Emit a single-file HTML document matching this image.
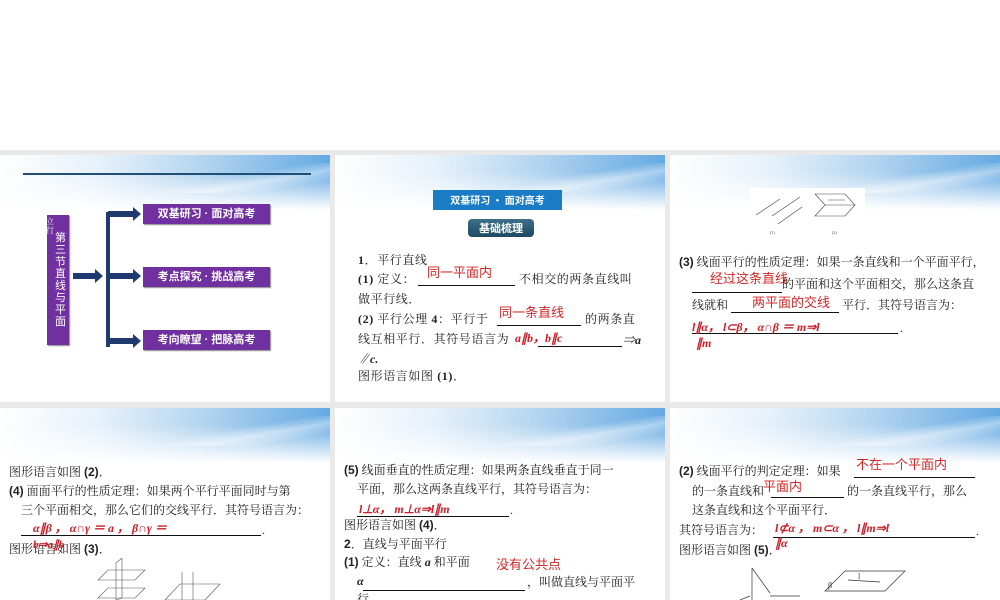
<!DOCTYPE html>
<html><head><meta charset="utf-8"><style>
*{margin:0;padding:0;box-sizing:border-box}
body{width:1000px;height:600px;background:#fff;position:relative;overflow:hidden;font-family:"Liberation Serif","Noto Serif CJK SC","Noto Sans CJK SC",serif;font-size:12px;color:#222}
.grid{position:absolute;left:0;top:150px;width:1000px;height:450px;background:#e9e9e9}
.s{position:absolute;background:#fff;overflow:hidden}
.hd{position:absolute;left:0;top:0;width:100%;height:55px;
background:linear-gradient(180deg,rgba(255,255,255,0) 0%,rgba(255,255,255,0) 30%,#fff 100%),linear-gradient(100deg,#fff 0%,#e6f1fa 30%,#b4d5f0 60%,#5fa6e2 100%)}
.hd:after{content:"";position:absolute;left:45%;top:8px;width:70%;height:30px;background:linear-gradient(170deg,rgba(255,255,255,0) 40%,rgba(255,255,255,.45) 55%,rgba(255,255,255,0) 70%)}
.t{position:absolute;white-space:nowrap;line-height:14px}
.b{font-family:"Liberation Sans",sans-serif;font-weight:bold}
.r{color:#d02828;font-family:"Liberation Sans","Noto Sans CJK SC",sans-serif;font-size:13px}
.ri{color:#c8202a;font-weight:bold;font-style:italic;font-family:"Liberation Serif",serif}
.u{position:absolute;border-bottom:1px solid #111;height:1px}
.pb{position:absolute;background:#7030a0;color:#fff;font-family:"Liberation Sans","Noto Sans CJK SC",sans-serif;font-weight:bold;font-size:11px;text-align:center;line-height:20px;box-shadow:1px 1px 1px #888}
.ls{letter-spacing:.6px}
</style></head><body>
<div class="grid"></div>

<!-- slide 1 -->
<div class="s" style="left:0;top:155px;width:330px;height:247px">
<div class="hd"></div>
<div style="position:absolute;left:23px;top:18px;width:288px;height:2px;background:#1f4e79"></div>
<div style="position:absolute;left:47px;top:60px;width:22px;height:130px;background:#7030a0;box-shadow:1px 1px 1px #888"></div>
<div class="t" style="left:55px;top:76px;width:12px;color:#fff;font-family:'Noto Sans CJK SC',sans-serif;font-size:11px;line-height:12px;white-space:normal">第三节　直线与平面</div>
<div class="t" style="left:46px;top:62px;color:#fff;font-size:8px;line-height:9px;width:6px;white-space:normal">立行</div>
<svg style="position:absolute;left:0;top:0" width="330" height="247">
<g fill="#1f3a6e">
<rect x="73" y="118" width="22" height="6"/><polygon points="95,114 103,121 95,128"/>
<rect x="106" y="57" width="4" height="135"/>
<rect x="108" y="56" width="25" height="6"/><polygon points="133,52 141,59 133,66"/>
<rect x="108" y="118" width="25" height="6"/><polygon points="133,114 141,121 133,128"/>
<rect x="108" y="183" width="25" height="6"/><polygon points="133,179 141,186 133,193"/>
</g></svg>
<div class="pb" style="left:143px;top:49px;width:127px">双基研习 · 面对高考</div>
<div class="pb" style="left:143px;top:112px;width:127px">考点探究 · 挑战高考</div>
<div class="pb" style="left:143px;top:175px;width:127px">考向瞭望 · 把脉高考</div>
</div>

<!-- slide 2 -->
<div class="s" style="left:335px;top:155px;width:330px;height:247px">
<div class="hd"></div>
<div style="position:absolute;left:98px;top:35px;width:129px;height:20px;background:#1a7cc4;color:#fff;font-family:'Noto Sans CJK SC',sans-serif;font-weight:bold;font-size:10px;line-height:20px;text-align:center">双基研习 · 面对高考</div>
<div style="position:absolute;left:133px;top:64px;width:66px;height:18px;background:linear-gradient(#3c6f88,#1d4a63);color:#fff;font-family:'Noto Sans CJK SC',sans-serif;font-weight:bold;font-size:11px;line-height:18px;text-align:center;border-radius:4px">基础梳理</div>
<div class="t ls" style="left:23px;top:98px"><b>1</b>．平行直线</div>
<div class="t ls" style="left:23px;top:117px"><b>(1)</b> 定义： </div>
<div class="u" style="left:83px;top:130px;width:97px"></div>
<div class="t r" style="left:92px;top:111px">同一平面内</div>
<div class="t ls" style="left:184px;top:117px">不相交的两条直线叫</div>
<div class="t ls" style="left:23px;top:137px">做平行线．</div>
<div class="t ls" style="left:23px;top:157px"><b>(2)</b> 平行公理 <b>4</b>：平行于</div>
<div class="u" style="left:162px;top:170px;width:84px"></div>
<div class="t r" style="left:164px;top:151px">同一条直线</div>
<div class="t ls" style="left:250px;top:157px">的两条直</div>
<div class="t ls" style="left:23px;top:177px">线互相平行．其符号语言为</div>
<div class="u" style="left:203px;top:191px;width:84px"></div>
<div class="t ri" style="left:180px;top:176px">a∥b，b∥c</div>
<div class="t" style="left:288px;top:178px"><b><i>⇒a</i></b></div>
<div class="t" style="left:23px;top:197px"><b><i>∥c.</i></b></div>
<div class="t ls" style="left:23px;top:214px">图形语言如图 <b>(1)</b>．</div>
</div>

<!-- slide 3 -->
<div class="s" style="left:670px;top:155px;width:330px;height:247px">
<div class="hd"></div>
<div style="position:absolute;left:80px;top:33px;width:115px;height:50px;background:#fff"></div>
<svg style="position:absolute;left:80px;top:35px" width="120" height="50" stroke="#444" stroke-width=".6" fill="none" font-size="4">
<line x1="6" y1="25" x2="30" y2="9"/><line x1="22" y1="26" x2="50" y2="7"/><line x1="28" y1="34" x2="52" y2="17"/>
<polyline points="65,4 95,4 105,15 95,26 65,26 75,15 65,4"/><line x1="75" y1="15" x2="105" y2="15"/><line x1="78" y1="10" x2="95" y2="10"/>
<text x="20" y="44" fill="#444" stroke="none">(1)</text><text x="82" y="44" fill="#444" stroke="none">(2)</text></svg>
<div class="t" style="left:9px;top:100px"><b class="b">(3)</b> 线面平行的性质定理：如果一条直线和一个平面平行，</div>
<div class="u" style="left:22px;top:137px;width:90px"></div>
<div class="t r" style="left:40px;top:117px">经过这条直线</div>
<div class="t" style="left:112px;top:122px">的平面和这个平面相交，那么这条直</div>
<div class="t" style="left:22px;top:143px">线就和</div>
<div class="u" style="left:61px;top:157px;width:108px"></div>
<div class="t r" style="left:82px;top:141px">两平面的交线</div>
<div class="t" style="left:172px;top:143px">平行．其符号语言为：</div>
<div class="u" style="left:22px;top:178px;width:206px"></div>
<div class="t ri" style="left:22px;top:165px">l∥α， l⊂β， α∩β ＝ m⇒l</div>
<div class="t" style="left:230px;top:166px">.</div>
<div class="t ri" style="left:26px;top:181px">∥m</div>
</div>

<!-- slide 4 -->
<div class="s" style="left:0;top:408px;width:330px;height:192px">
<div class="hd"></div>
<div class="t" style="left:9px;top:57px">图形语言如图 <b class="b">(2)</b>．</div>
<div class="t" style="left:9px;top:76px"><b class="b">(4)</b> 面面平行的性质定理：如果两个平行平面同时与第</div>
<div class="t" style="left:21px;top:95px">三个平面相交，那么它们的交线平行．其符号语言为：</div>
<div class="u" style="left:21px;top:127px;width:240px"></div>
<div class="t ri" style="left:33px;top:113px">α∥β ，  α∩γ ＝ a ，  β∩γ ＝</div>
<div class="t" style="left:262px;top:115px">.</div>
<div class="t" style="left:9px;top:134px">图形语言如图 <b class="b">(3)</b>．</div>
<div class="t ri" style="left:33px;top:130px;font-size:11px">b⇒a∥b</div>
<svg style="position:absolute;left:90px;top:150px" width="140" height="42" stroke="#555" stroke-width=".6" fill="none">
<polygon points="8,22 18,12 55,12 45,22"/><polygon points="8,40 18,30 55,30 45,40"/><polyline points="26,5 32,0 32,40 26,42 26,5"/>
<polygon points="75,42 90,26 130,26 115,42"/><line x1="92" y1="14" x2="92" y2="42"/><line x1="103" y1="14" x2="103" y2="42"/></svg>
</div>

<!-- slide 5 -->
<div class="s" style="left:335px;top:408px;width:330px;height:192px">
<div class="hd"></div>
<div class="t" style="left:9px;top:55px"><b class="b">(5)</b> 线面垂直的性质定理：如果两条直线垂直于同一</div>
<div class="t" style="left:22px;top:74px">平面，那么这两条直线平行，其符号语言为：</div>
<div class="u" style="left:22px;top:108px;width:152px"></div>
<div class="t ri" style="left:24px;top:94px">l⊥α， m⊥α⇒l∥m</div>
<div class="t" style="left:175px;top:95px">.</div>
<div class="t" style="left:9px;top:110px">图形语言如图 <b class="b">(4)</b>．</div>
<div class="t" style="left:9px;top:129px"><b class="b">2</b>．直线与平面平行</div>
<div class="t" style="left:9px;top:147px"><b class="b">(1)</b> 定义：直线 <b><i>a</i></b> 和平面</div>
<div class="t r" style="left:161px;top:150px">没有公共点</div>
<div class="u" style="left:28px;top:182px;width:162px"></div>
<div class="t" style="left:22px;top:166px"><b><i>α</i></b></div>
<div class="t" style="left:192px;top:167px">，叫做直线与平面平</div>
<div class="t" style="left:22px;top:184px">行．</div>
</div>

<!-- slide 6 -->
<div class="s" style="left:670px;top:408px;width:330px;height:192px">
<div class="hd"></div>
<div class="t" style="left:9px;top:56px"><b class="b">(2)</b> 线面平行的判定定理：如果</div>
<div class="u" style="left:184px;top:69px;width:121px"></div>
<div class="t r" style="left:186px;top:50px">不在一个平面内</div>
<div class="t" style="left:22px;top:76px">的一条直线和</div>
<div class="u" style="left:101px;top:89px;width:73px"></div>
<div class="t r" style="left:93px;top:72px">平面内</div>
<div class="t" style="left:177px;top:76px">的一条直线平行，那么</div>
<div class="t" style="left:22px;top:95px">这条直线和这个平面平行．</div>
<div class="t" style="left:9px;top:115px">其符号语言为：</div>
<div class="u" style="left:103px;top:129px;width:202px"></div>
<div class="t ri" style="left:105px;top:113px">l⊄α ， m⊂α ， l∥m⇒l</div>
<div class="t" style="left:306px;top:116px">.</div>
<div class="t ri" style="left:105px;top:128px">∥α</div>
<div class="t" style="left:9px;top:135px">图形语言如图 <b class="b">(5)</b>．</div>
<svg style="position:absolute;left:60px;top:160px" width="180" height="32" stroke="#333" stroke-width=".7" fill="none" font-size="8">
<polyline points="22,0 22,32"/><line x1="22" y1="0" x2="40" y2="25"/><line x1="10" y1="32" x2="20" y2="28"/><line x1="40" y1="28" x2="70" y2="28"/>
<polygon points="95,23 115,3 175,3 155,23"/><line x1="118" y1="12" x2="150" y2="14"/><text x="128" y="11" stroke="none" fill="#333">l</text><text x="98" y="20" stroke="none" fill="#333">β</text></svg>
</div>
</body></html>
